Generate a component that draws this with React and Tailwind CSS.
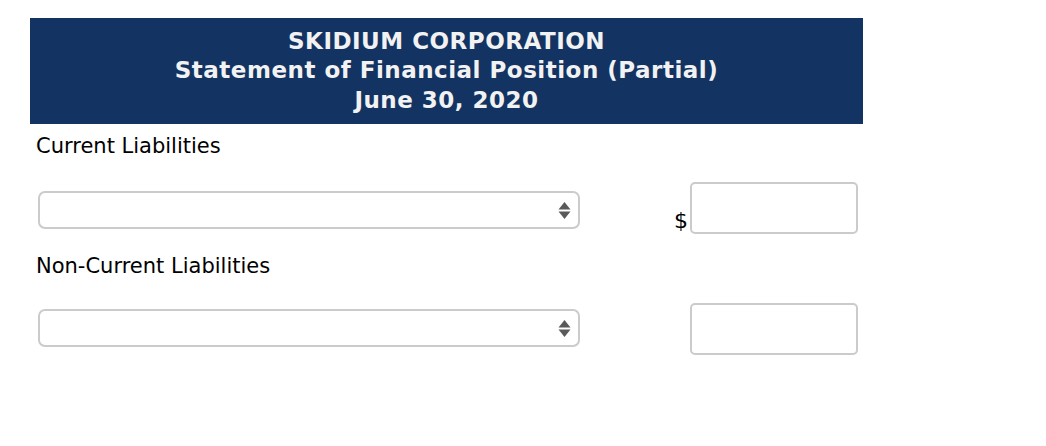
export default function App() {
  const rows = [
    { label: "Current Liabilities", dollar: true },
    { label: "Non-Current Liabilities", dollar: false },
  ];

  return (
    <div className="min-h-[446px] w-[1046px] bg-white pl-[30px] pt-[18px]" style={{ fontFamily: '"DejaVu Sans", sans-serif' }}>
      <div className="w-[833px]">
        {/* Header */}
        <div className="flex h-[106px] flex-col items-center justify-center bg-[#133463] text-[23px] font-bold leading-[29.5px] tracking-[0.5px] text-[#f2f2f2]">
          <div>SKIDIUM CORPORATION</div>
          <div>Statement of Financial Position (Partial)</div>
          <div>June 30, 2020</div>
        </div>

        {rows.map((r, i) => (
          <div key={r.label}>
            <div className={`${i === 0 ? "mt-[10px]" : "mt-[20px]"} pl-[6px] text-[21px] leading-[24px] text-black`}>{r.label}</div>
            <div className="flex items-start">
              <div className={`${r.dollar ? "mt-[33px]" : "mt-[31px]"} ml-[8px] flex h-[38px] w-[542px] items-center justify-end rounded-[7px] border-2 border-[#cbcbcb] bg-white pr-[7px]`}>
                <svg width="13" height="19" viewBox="0 0 13 19">
                  <path d="M6.5 1 L12.5 8.5 L0.5 8.5 Z" fill="#5a5a5a" />
                  <path d="M6.5 18 L12.5 10.5 L0.5 10.5 Z" fill="#5a5a5a" />
                </svg>
              </div>
              <div className="ml-[94px] mt-[52px] w-[16px] text-[22px] leading-[22px] text-black">{r.dollar ? "$" : ""}</div>
              <div className={`${r.dollar ? "mt-[24px]" : "mt-[25px]"} h-[52px] w-[168px] rounded-[5px] border-2 border-[#cbcbcb] bg-white`} />
            </div>
          </div>
        ))}
      </div>
    </div>
  );
}
